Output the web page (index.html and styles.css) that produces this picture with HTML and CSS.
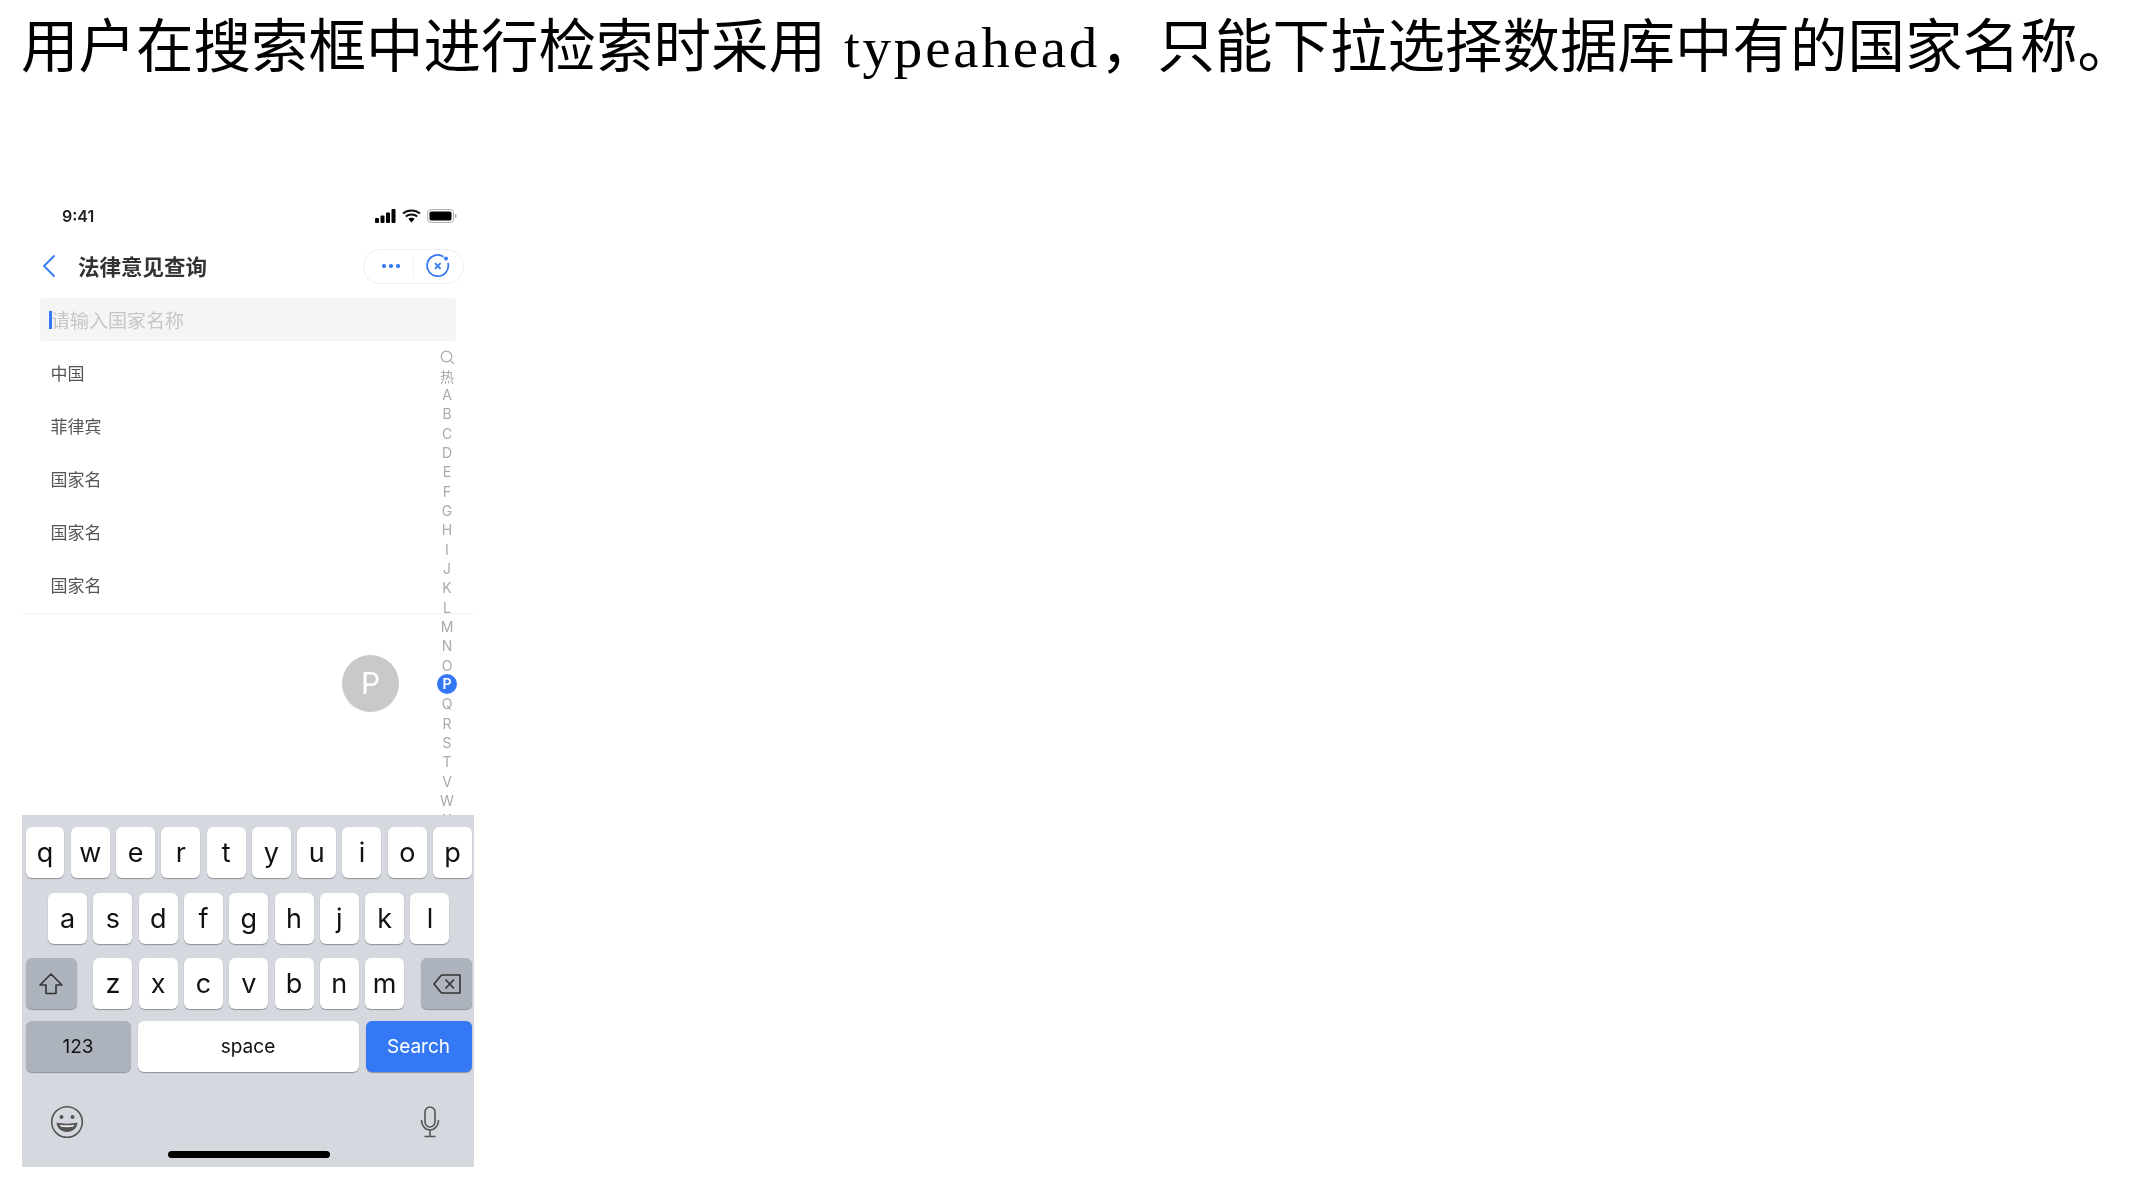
FILE: index.html
```html
<!DOCTYPE html>
<html lang="zh">
<head>
    <meta charset="UTF-8">
    <title>typeahead</title>
    <link rel="stylesheet" href="styles.css">
</head>
<body>
    <h1 class="heading">用户在搜索框中进行检索时采用 <span class="latin">typeahead</span>，只能下拉选择数据库中有的国家名称。</h1>

    <div class="phone">
        <div class="status">
            <span class="time">9:41</span>
            <div class="status-icons">
                <svg width="21" height="14" viewBox="0 0 21 14"><rect x="0" y="9" width="4" height="5" rx="1"/><rect x="5.5" y="6.5" width="4" height="7.5" rx="1"/><rect x="11" y="3.5" width="4" height="10.5" rx="1"/><rect x="16.5" y="0" width="4" height="14" rx="1"/></svg>
                <svg width="19" height="14" viewBox="0 0 19 14"><path d="M1 4.6C5.5.4 13.5.4 18 4.6M3.8 7.6c3-2.7 8.4-2.7 11.4 0" fill="none" stroke="#111" stroke-width="2"/><path d="M6.3 9.8c1.8-1.5 4.6-1.5 6.4 0L9.5 13.4z"/></svg>
                <svg width="30" height="14" viewBox="0 0 30 14"><rect x=".6" y=".6" width="26" height="12.8" rx="3.5" fill="none" stroke="#aaa"/><rect x="2.5" y="2.5" width="22" height="9" rx="1.8"/><rect x="27.8" y="5" width="1.6" height="4" rx=".8" fill="#aaa"/></svg>
            </div>
        </div>

        <div class="nav">
            <svg class="back" width="14" height="24" viewBox="0 0 14 24"><path d="M12.5 1.5 2 12l10.5 10.5" fill="none" stroke="#3478f6" stroke-width="1.8"/></svg>
            <span class="nav-title">法律意见查询</span>
            <div class="capsule">
                <div class="more"><i></i><i></i><i></i></div>
                <div class="capsule-line"></div>
                <svg width="24" height="24" viewBox="0 0 24 24"><path d="M17.5 2.7A10.6 10.6 0 1 0 22 9" fill="none" stroke="#3478f6" stroke-width="1.8"/><circle cx="20" cy="4.6" r="2" fill="#3478f6"/><path d="m9 9.2 5.6 5.6m0-5.6L9 14.800" fill="none" stroke="#3478f6" stroke-width="1.8"/></svg>
            </div>
        </div>

        <div class="search"><span class="caret"></span><span class="placeholder">请输入国家名称</span></div>

        <ul class="countries">
            <li>中国</li>
            <li>菲律宾</li>
            <li>国家名</li>
            <li>国家名</li>
            <li>国家名</li>
        </ul>

        <!-- 右侧字母索引 -->
        <ul class="index">
            <li class="short"><svg width="15" height="15" viewBox="0 0 15 15"><circle cx="6.500" cy="6.500" r="5.300" fill="none" stroke="#aaa" stroke-width="1.200"/><path d="m10.800 10.800 3 3" stroke="#aaa" stroke-width="1.200"/></svg></li>
            <li class="short">热</li>
            <li>A</li><li>B</li><li>C</li><li>D</li><li>E</li><li>F</li><li>G</li><li>H</li>
            <li>I</li><li>J</li><li>K</li><li>L</li><li>M</li><li>N</li><li>O</li>
            <li class="active"><span>P</span></li>
            <li>Q</li><li>R</li><li>S</li><li>T</li><li>V</li><li>W</li><li>X</li>
        </ul>
        <div class="bubble">P</div>

        <div class="keyboard">
            <div class="row row1">
                <div class="key">q</div><div class="key">w</div><div class="key">e</div><div class="key">r</div><div class="key">t</div>
                <div class="key">y</div><div class="key">u</div><div class="key">i</div><div class="key">o</div><div class="key">p</div>
            </div>
            <div class="row row2">
                <div class="key">a</div><div class="key">s</div><div class="key">d</div><div class="key">f</div><div class="key">g</div>
                <div class="key">h</div><div class="key">j</div><div class="key">k</div><div class="key">l</div>
            </div>
            <div class="row row3">
                <div class="key fn">
                    <svg width="26" height="24" viewBox="0 0 26 24"><path d="M13 2 2 13h6v8.500h10V13h6z" fill="none" stroke="#333" stroke-width="1.600" stroke-linejoin="round"/></svg>
                </div>
                <div class="letters">
                    <div class="key">z</div><div class="key">x</div><div class="key">c</div><div class="key">v</div>
                    <div class="key">b</div><div class="key">n</div><div class="key">m</div>
                </div>
                <div class="key fn">
                    <svg width="28" height="20" viewBox="0 0 28 20"><path d="M8.500 1H27v18H8.500L1 10z" fill="none" stroke="#333" stroke-width="1.600" stroke-linejoin="round"/><path d="m12.500 5.500 8.500 9m0-9-8.500 9" fill="none" stroke="#333" stroke-width="1.600"/></svg>
                </div>
            </div>
            <div class="row row4">
                <div class="key fn num">123</div>
                <div class="key space">space</div>
                <div class="key go">Search</div>
            </div>
            <div class="kb-bottom">
                <svg width="34" height="34" viewBox="0 0 34 34"><circle cx="17" cy="17" r="15.300" fill="none" stroke="#555" stroke-width="1.600"/><circle cx="11.500" cy="12" r="2" fill="#555"/><circle cx="22.500" cy="12" r="2" fill="#555"/><path d="M6.500 17.500c6 1.500 15 1.500 21 0-.5 6-5 9.500-10.500 9.500S7 23.500 6.500 17.500z" fill="#555"/><path d="M9.500 19.800c4.500.7 10.500.7 15 0-.5.800-1 1.500-1.500 2-3.500.5-8.500.5-12 0-.5-.5-1-1.200-1.500-2z" fill="#eee"/></svg>
                <svg width="20" height="32" viewBox="0 0 20 32"><rect x="5" y="1" width="10" height="20" rx="5" fill="none" stroke="#555" stroke-width="1.600"/><path d="M1.500 14c0 5.500 3.500 10 8.500 10s8.500-4.500 8.500-10M10 24v6.500M4.500 30.500h11" fill="none" stroke="#555" stroke-width="1.600"/></svg>
            </div>
            <div class="home-bar"></div>
        </div>
    </div>
</body>
</html>
```

FILE: styles.css
```css
*{
    margin: 0;
    padding: 0;
    box-sizing: border-box;
}
li{
    list-style: none;
}
body{
    background: #fff;
    width: 2136px;
    height: 1178px;
    overflow: hidden;
    font-family: Inter, "Noto Sans CJK SC", sans-serif;
}

.heading{
    height: 92px;
    margin-bottom: 99px;
    padding-left: 21px;
    font: 400 57.500px/84px "Noto Sans CJK SC", sans-serif;
    color: #000;
    white-space: nowrap;
}
.heading .latin{
    margin-left: 5px;
    font: 400 57px/84px "Liberation Serif", serif;
    letter-spacing: 2.800px;
}

.phone{
    position: relative;
    display: flex;
    flex-direction: column;
    width: 452px;
    height: 976px;
    margin-left: 22px;
    overflow: hidden;
    background: #fff;
    filter: blur(.4px);
}

/*状态栏*/
.status{
    display: flex;
    justify-content: space-between;
    align-items: center;
    flex: none;
    height: 49px;
    padding: 0 17px 0 40px;
}
.time{
    font-size: 16px;
    font-weight: 600;
    color: #222;
}
.status-icons{
    display: flex;
    align-items: center;
    gap: 6px;
}

.nav{
    display: flex;
    align-items: center;
    flex: none;
    height: 52px;
    padding: 0 10px 0 20px;
}
.nav-title{
    margin: 0 0 2px 22px;
    font-size: 21.500px;
    font-weight: 600;
    color: #333;
}
.capsule{
    display: flex;
    align-items: center;
    width: 101px;
    height: 35px;
    margin-left: auto;
    padding-left: 18px;
    border: 1px solid #eee;
    border-radius: 18px;
}
.more{
    display: flex;
    gap: 3.500px;
}
.more i{
    width: 3.500px;
    height: 3.500px;
    border-radius: 50%;
    background: #3478f6;
}
.capsule-line{
    width: 1px;
    height: 22px;
    margin: 0 12px 0 13px;
    background: #f2f2f2;
}

.search{
    display: flex;
    align-items: center;
    flex: none;
    height: 43px;
    margin: 6px 18px 0 18px;
    padding-left: 9px;
    border-radius: 3px;
    background: #f5f5f5;
}
.caret{
    width: 3px;
    height: 18px;
    background: #3478f6;
}
.placeholder{
    margin-left: -1px;
    font-size: 19px;
    color: #c6c6c6;
}

.countries{
    flex: none;
    margin-top: 7px;
    border-bottom: 1px solid #f2f2f2;
}
.countries li{
    height: 53px;
    padding-left: 28.500px;
    font-size: 17px;
    line-height: 53px;
    color: #555;
}

/*右侧索引，盖在列表上面*/
.index{
    position: absolute;
    top: 157px;
    right: 17px;
    width: 20px;
    font-size: 14px;
    color: #aaa;
    text-align: center;
}
.index li{
    display: flex;
    justify-content: center;
    align-items: center;
    height: 19.330px;
}
.index .short{
    height: 18.500px;
}
.index .active span{
    width: 20px;
    height: 20px;
    margin-top: -2px;
    border-radius: 50%;
    background: #3478f6;
    color: #fff;
    font-weight: 600;
    line-height: 20px;
}
.bubble{
    position: absolute;
    top: 464px;
    left: 320px;
    width: 57px;
    height: 57px;
    border-radius: 50%;
    background: #c9c9c9;
    color: #fff;
    font-size: 30px;
    line-height: 57px;
    text-align: center;
}

/*键盘*/
.keyboard{
    position: relative;
    z-index: 1;
    display: flex;
    flex-direction: column;
    flex: none;
    height: 352px;
    margin-top: auto;
    padding: 12px 2px 0 3.500px;
    background: #d5d8de;
}
.row{
    display: flex;
    gap: 6.300px;
}
.row2{
    justify-content: center;
    margin-top: 15px;
}
.row3{
    justify-content: space-between;
    margin-top: 14px;
}
.row4{
    gap: 7px;
    margin-top: 12px;
}
.letters{
    display: flex;
    gap: 6.300px;
}
.key{
    display: flex;
    justify-content: center;
    align-items: center;
    width: 39px;
    height: 51px;
    border-radius: 6px;
    background: #fff;
    box-shadow: 0 1px 1px #8f9297;
    font-size: 27px;
    color: #111;
}
.fn{
    width: 51px;
    background: #adb3bd;
}
.num{
    width: 105px;
    font-size: 19px;
}
.space{
    width: 221px;
    font-size: 19px;
}
.go{
    width: 106px;
    background: #3478f6;
    color: #fff;
    font-size: 19px;
}
.kb-bottom{
    display: flex;
    justify-content: space-between;
    align-items: center;
    height: 34px;
    margin-top: 33px;
    padding: 0 32px 0 24px;
}
.home-bar{
    position: absolute;
    left: 146px;
    bottom: 9px;
    width: 162px;
    height: 7px;
    border-radius: 4px;
    background: #000;
}
```
